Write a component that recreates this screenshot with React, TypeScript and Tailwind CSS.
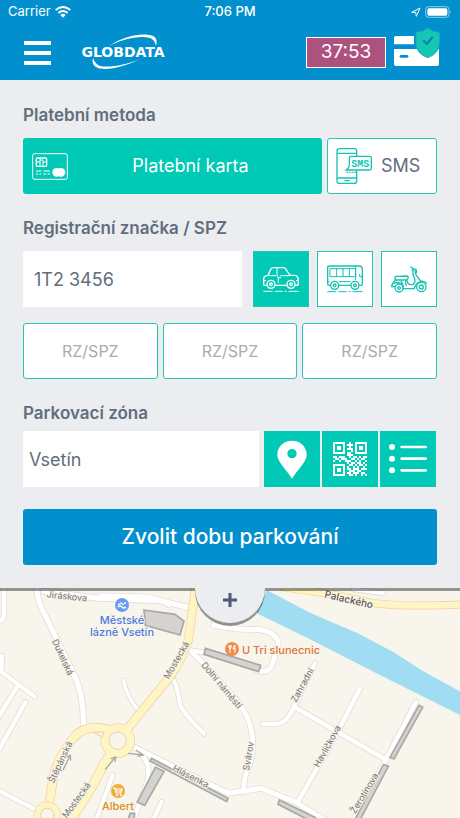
import React, { useState } from "react";
import clsx from "clsx";

const streets = [
  { d: "M-10 128 L6 120 Q14 112 12 90 V20", w: 14 },
  { d: "M110 20 Q112 65 130 95 L225 290 Q252 350 250 432", w: 16 },
  { d: "M130 34 L300 55 L480 62 L575 85", w: 16 },
  { d: "M300 45 L420 48 Q480 50 505 76", w: 10 },
  { d: "M6 228 L4 275 L105 350", w: 13 },
  { d: "M52 320 L-10 420", w: 13 },
  { d: "M76 367 L-6 515", w: 13 },
  { d: "M-10 628 L60 665 L110 690", w: 13 },
  { d: "M370 300 Q380 350 418 395", w: 11 },
  { d: "M515 290 Q535 320 540 375 Q555 405 612 461", w: 13 },
  { d: "M565 210 L600 215 L640 222", w: 12 },
  { d: "M575 215 Q600 240 690 338 Q750 400 757 470 Q760 530 742 570 Q730 600 731 635", w: 15 },
  { d: "M400 500 L520 560 L685 640 L784 625 L890 668 L975 720", w: 15 },
  { d: "M430 530 Q455 560 440 610 L400 720", w: 14 },
  { d: "M338 585 L285 730", w: 13 },
  { d: "M485 665 L455 730", w: 13 },
  { d: "M640 135 Q700 150 770 148 Q830 155 835 190 Q825 235 812 262 Q800 280 770 272", w: 15 },
  { d: "M945 250 L882 380 Q860 430 830 432 H788", w: 13 },
  { d: "M882 380 L1155 538", w: 14 },
  { d: "M1080 325 L1008 465 L892 668", w: 14 },
  { d: "M1248 366 L1155 545 L1060 720", w: 14 },
  { d: "M1060 28 L1150 40", w: 12 },
];

const mainRoads = [
  { d: "M588 15 L565 180 Q545 240 510 290 L400 425 L355 480", w: 23 },
  { d: "M350 458 Q260 420 215 480 Q170 540 160 590 L145 690", w: 24 },
  { d: "M355 490 L310 555 Q280 620 205 730", w: 26 },
  { d: "M850 22 Q1000 40 1110 68 Q1210 82 1390 73", w: 20 },
];

const buildings = [
  "M432 90 L525 103 L552 123 L540 165 L436 136 Z",
  "M616 205 L782 256 L776 275 L612 223 Z",
  "M466 562 L492 574 L434 676 L412 666 Z",
  "M455 535 L684 655 L680 665 L450 543 Z",
  "M838 660 L945 712 L930 722 L834 673 Z",
  "M1257 376 L1268 382 L1182 537 L1170 532 Z",
  "M1150 554 L1165 559 L1080 720 L1064 720 Z",
  "M390 700 L404 700 L402 720 L384 720 Z",
];

const streetNames = [
  { name: "Jiráskova", x: 67, y: 8, rotate: 6 },
  { name: "Dukelská", x: 63, y: 69, rotate: 65 },
  { name: "Mostecká", x: 176, y: 72, rotate: -60 },
  { name: "Dolní náměstí", x: 222, y: 97, rotate: 50 },
  { name: "Štěpánská", x: 60, y: 174, rotate: -65 },
  { name: "Mostecká", x: 76, y: 212, rotate: -54 },
  { name: "Hlásenka", x: 191, y: 188, rotate: 27 },
  { name: "Svárov", x: 248, y: 168, rotate: -80 },
  { name: "Zahradní", x: 302, y: 97, rotate: -61 },
  { name: "Havlíčkova", x: 327, y: 158, rotate: -61 },
  { name: "Žerotínova", x: 364, y: 205, rotate: -59 },
];

const Roads = ({ items, edge, fill }: { items: typeof streets; edge: string; fill: string }) => (
  <g fill="none" strokeLinecap="round" strokeLinejoin="round">
    {items.map((r) => (
      <path key={r.d} d={r.d} stroke={edge} strokeWidth={r.w + 4} />
    ))}
    {items.map((r) => (
      <path key={r.d} d={r.d} stroke={fill} strokeWidth={r.w} />
    ))}
  </g>
);

const CityMap = () => (
  <svg
    viewBox="0 0 460 230"
    preserveAspectRatio="xMidYMin slice"
    className="min-h-[230px] w-full flex-1 bg-[#f8f5ed] font-['Inter','Noto_Sans',sans-serif]"
    role="img"
    aria-label="Mapa"
  >
    <g transform="translate(0 -8) scale(0.33333)">
      <path
        d="M800 30 L930 98 L1070 158 L1180 216 L1270 274 L1390 340 V410 L1230 330 L1110 270 L930 178 L770 100 Z"
        fill="#a0dcf2"
      />
      <Roads items={streets} edge="#dcd9d2" fill="#ffffff" />
      <circle cx="353" cy="482" r="52" fill="#f7cc9b" />
      <Roads items={mainRoads} edge="#f7cc9b" fill="#fdf5c4" />
      <circle cx="353" cy="482" r="50" fill="#fdf5c4" />
      <circle cx="353" cy="482" r="26" fill="#f8f5ed" stroke="#f3cda5" strokeWidth="3" />
      <path d="M278 457 L312 456 L308 470 Z" fill="#f8f5ed" stroke="#f3cda5" strokeWidth="3" />
      <circle cx="142" cy="705" r="40" fill="#fdf5c4" stroke="#f7cc9b" strokeWidth="2" />
      <circle cx="142" cy="705" r="20" fill="#f8f5ed" stroke="#f3cda5" strokeWidth="3" />
      <g fill="#d5d3cf" stroke="#a9a8a5" strokeWidth="5">
        {buildings.map((d) => (
          <path key={d} d={d} />
        ))}
      </g>
      <g fill="none" stroke="#aaa9a5" strokeWidth="4">
        <path d="M188 572 L210 528 M200 532 L211 526 L212 542" />
        <path d="M316 568 L346 532 M332 536 L347 531 L345 546" />
        <path d="M384 520 L430 525 M408 510 L430 525 L412 529" />
      </g>
    </g>

    <g
      textAnchor="middle"
      dominantBaseline="central"
      stroke="#f8f5ed"
      strokeWidth="2"
      strokeLinejoin="round"
      paintOrder="stroke"
      className="text-[9px]"
      fill="#77736e"
    >
      {streetNames.map((s) => (
        <text key={s.name + s.x} transform={`translate(${s.x} ${s.y}) rotate(${s.rotate})`}>
          {s.name}
        </text>
      ))}
      <text transform="translate(349 11) rotate(13)" className="text-[10px] font-medium" fill="#5a5753">
        Palackého
      </text>
      <g className="text-[11px] font-medium">
        <g fill="#4f7bdc">
          <text x="122" y="32">Městské</text>
          <text x="122" y="44">lázně Vsetín</text>
        </g>
        <text x="281" y="62" fill="#e0743a">U Tri slunecnic</text>
        <text x="118" y="218" fill="#d98c28">Albert</text>
      </g>
    </g>

    <circle cx="122" cy="17" r="7" fill="#699cf0" />
    <path d="M118 17 l3 -2 l3 2 M118 19 q2 -2 4 0 t4 0" fill="none" stroke="#fff" strokeWidth="1.3" />
    <circle cx="125" cy="15" r="1" fill="#fff" />
    <circle cx="232" cy="61" r="7" fill="#f18b4b" />
    <path d="M229 57 v3 q1 1 2 0 v-3 M230 57 v8 M235 65 v-8 q-2 1 -2 4 h2" fill="none" stroke="#fff" strokeWidth="1" />
    <circle cx="118" cy="203" r="7" fill="#f3ac37" />
    <path d="M113 200 h2 l1 5 h5 l1 -4 h-7 M116 203 h5" fill="none" stroke="#fff" strokeWidth="1.2" />
    <circle cx="117" cy="207" r="1" fill="#fff" />
    <circle cx="121" cy="207" r="1" fill="#fff" />
  </svg>
);

const Logo = () => (
  <svg viewBox="0 0 84 36" className="ml-[30px] h-9 w-[84px]" role="img" aria-label="Globdata">
    <path d="M28 12 C42 2 62 -2 72 2 Q77 4 75 12 Q74 6 69 4 C58 1 42 5 28 12 Z" fill="#fff" />
    <path d="M59 25 C46 32 26 37 17 34 Q10 31 12 24 Q14 30 19 32 C29 34 45 31 59 25 Z" fill="#fff" />
    <text
      x="42"
      y="23"
      textAnchor="middle"
      fill="#fff"
      className="font-['DejaVu_Sans',sans-serif] text-[14px] font-bold"
    >
      GLOBDATA
    </text>
  </svg>
);

const StatusBar = () => (
  <div className="grid h-6 grid-cols-3 items-center px-2 text-[13px]">
    <div className="flex items-center gap-1">
      <span>Carrier</span>
      <svg viewBox="0 0 48 36" className="h-3 w-4" fill="none" stroke="#fff" strokeWidth="6">
        <path d="M2 12 Q24 -6 46 12" />
        <path d="M10 21 Q24 9 38 21" />
        <path d="M16 27 Q24 20 32 27 L24 35 Z" fill="#fff" stroke="none" />
      </svg>
    </div>
    <span className="text-center font-medium">7:06 PM</span>
    <div className="flex items-center justify-end gap-1">
      <svg viewBox="0 0 30 30" className="size-[10px]" fill="none" stroke="#fff" strokeWidth="3">
        <path d="M2 16 L27 3 L16 28 L14 16 Z" strokeLinejoin="round" />
      </svg>
      <svg viewBox="0 0 81 36" className="h-3 w-[27px]">
        <rect x="2" y="2" width="70" height="32" rx="9" fill="none" stroke="#8fcbe9" strokeWidth="3" />
        <rect x="7" y="7" width="60" height="22" rx="5" fill="#fff" />
        <path d="M76 13 Q81 18 76 23 Z" fill="#8fcbe9" />
      </svg>
    </div>
  </div>
);

const ShieldCard = () => (
  <svg viewBox="0 0 138 117" className="h-[39px] w-[46px]">
    <rect x="0" y="24" width="135" height="90" rx="6" fill="#fff" />
    <path d="M0 49 H135 V63 H0 Z" fill="#018fce" />
    <path d="M60 20 H70 V60 H60 Z" fill="#018fce" />
    <path
      d="M101 0 Q114 12 136 13 V46 Q136 76 101 89 Q66 76 66 46 V13 Q88 12 101 0 Z"
      fill="#15c6b4"
      stroke="#14a9c0"
      strokeWidth="3"
    />
    <path d="M88 37 L98 48 L116 27" fill="none" stroke="#0284b0" strokeWidth="6" />
    <rect x="17" y="81" width="26" height="8" rx="4" fill="#018fce" />
  </svg>
);

const CardIcon = () => (
  <svg viewBox="0 0 108 81" className="h-[27px] w-9" fill="none" stroke="#fff" strokeWidth="3">
    <rect x="2" y="2" width="104" height="77" rx="6" />
    <rect x="13" y="15" width="31" height="25" rx="3" strokeWidth="4" />
    <path d="M13 27 H24 M33 27 H44 M24 15 V40 M33 22 V40 M24 21 H33" strokeWidth="3" />
    <path d="M12 54 H28 M34 54 H54" />
    <path d="M12 63 H18 M22 63 H28 M34 63 H42 M46 63 H54" />
    <circle cx="74" cy="58" r="13" fill="#fff" stroke="none" />
    <circle cx="87" cy="58" r="13" fill="#fff" stroke="none" />
  </svg>
);

const SmsIcon = () => (
  <svg viewBox="0 0 108 108" className="size-9" fill="none" stroke="#15c3b1" strokeWidth="4">
    <rect x="3" y="2" width="59" height="104" rx="8" />
    <path d="M3 16 H62 M3 90 H62 M25 98 H41" />
    <path d="M45 25 H101 Q106 25 106 30 V61 Q106 66 101 66 H31 Q40 60 40 52 V30 Q40 25 45 25 Z" fill="#fff" />
    <path d="M31 73 H60" strokeDasharray="5 3" />
    <text
      x="73"
      y="56"
      textAnchor="middle"
      fill="#15c3b1"
      stroke="none"
      fontSize="30"
      className="font-['Liberation_Mono',monospace] font-bold"
    >
      SMS
    </text>
  </svg>
);

const CarIcon = () => (
  <svg viewBox="0 0 108 81" className="h-[27px] w-9" fill="none" stroke="currentColor" strokeWidth="4" strokeLinecap="round">
    <path d="M11 58 H4 Q2 58 2 53 V38 Q2 32 8 30 L16 27 L22 12 Q25 5 32 5 H60 Q66 5 69 10 L81 28 H96 Q106 30 106 42 V53 Q106 58 100 58 H97 M38 58 H70" />
    <path d="M17 29 H38 M52 29 H81 M42 6 V26 L46 36 V50 M48 35 H53 M2 44 H8 M100 44 H106" strokeWidth="3" />
    <circle cx="24" cy="55" r="12" />
    <circle cx="24" cy="55" r="4" />
    <circle cx="84" cy="55" r="12" />
    <circle cx="84" cy="55" r="4" />
    <path d="M2 76 H28 M37 76 H58 M66 76 H70 M78 76 H106" strokeWidth="3" />
  </svg>
);

const BusIcon = () => (
  <svg viewBox="0 0 108 84" className="h-7 w-9" fill="none" stroke="currentColor" strokeWidth="4" strokeLinecap="round">
    <path d="M10 61 H6 Q2 61 2 57 V8 Q2 3 8 3 H96 Q106 3 106 14 V57 Q106 61 102 61 H97 M37 61 H70" />
    <path d="M10 11 H86 V35 H10 Z M29 11 V35 M48 11 V35 M67 11 V35 M86 3 V44 M98 28 V35 H106" strokeWidth="3" />
    <path d="M2 50 H6 M37 50 H70" strokeWidth="3" />
    <circle cx="23" cy="61" r="12" fill="#fff" />
    <circle cx="23" cy="61" r="4" />
    <circle cx="84" cy="61" r="12" fill="#fff" />
    <circle cx="84" cy="61" r="4" />
    <path d="M2 80 H26 M36 80 H58 M66 80 H70 M78 80 H106" strokeWidth="3" />
  </svg>
);

const ScooterIcon = () => (
  <svg viewBox="0 0 108 81" className="h-[27px] w-9" fill="none" stroke="currentColor" strokeWidth="4" strokeLinecap="round" strokeLinejoin="round">
    <path d="M12 34 Q14 30 22 31 L48 30 Q54 32 50 38 L46 42 H16 Q10 40 12 34 Z" />
    <path d="M14 42 Q3 50 2 62 H12 M36 64 Q38 54 30 46 M46 42 Q42 50 46 58 M36 68 H70 Q74 50 90 46 L76 28 Q72 20 72 12" />
    <path d="M66 12 V26 Q72 36 72 46 Q70 56 60 56 Q50 56 48 44" />
    <path d="M60 3 L66 8 L64 14 M66 8 L74 10 Q78 14 76 20 M90 46 Q102 44 106 52" />
    <path d="M10 52 Q18 46 32 54" />
    <circle cx="24" cy="66" r="12" />
    <circle cx="24" cy="66" r="4" />
    <circle cx="91" cy="63" r="14" />
    <circle cx="91" cy="63" r="6" />
  </svg>
);

const PinIcon = () => (
  <svg viewBox="0 0 90 117" className="h-[39px] w-[30px]">
    <path
      fillRule="evenodd"
      d="M45 2 C20 2 1 20 1 44 C1 66 28 88 45 116 C62 88 89 66 89 44 C89 20 70 2 45 2 Z M45 27 A14 14 0 1 1 45 55 A14 14 0 1 1 45 27 Z"
      fill="#fff"
    />
  </svg>
);

const qrRows = [
  "11111100100111111",
  "10000101110100001",
  "10110100100101101",
  "10110101110101101",
  "10000100010100001",
  "11111101100111111",
  "00000001110000000",
  "11011100101101011",
  "01101110011010110",
  "10010011100101001",
  "00000001011011010",
  "11111100110101101",
  "10000101001010010",
  "10110101101110111",
  "10110100111011000",
  "10000101101110110",
  "11111100110100101",
];

const QrIcon = () => (
  <svg viewBox="0 0 17 17" className="size-[34px]" shapeRendering="crispEdges" fill="#fff">
    {qrRows.map((row, y) =>
      row.split("").map((cell, x) => cell === "1" && <rect key={`${x}-${y}`} x={x} y={y} width="1" height="1" />)
    )}
  </svg>
);

const ListIcon = () => (
  <svg viewBox="0 0 114 90" className="h-[30px] w-[38px]" stroke="#fff" strokeWidth="8" strokeLinecap="round">
    {[9, 44, 79].map((y) => (
      <g key={y}>
        <circle cx="9" cy={y} r="9" fill="#fff" stroke="none" />
        <path d={`M38 ${y} H110`} />
      </g>
    ))}
  </svg>
);

const vehicles = [
  { id: "car", label: "Auto", Icon: CarIcon },
  { id: "bus", label: "Autobus", Icon: BusIcon },
  { id: "scooter", label: "Skútr", Icon: ScooterIcon },
];

const zoneTools = [
  { label: "Najít na mapě", Icon: PinIcon },
  { label: "Naskenovat QR kód", Icon: QrIcon },
  { label: "Seznam zón", Icon: ListIcon },
];

const App = () => {
  const [vehicle, setVehicle] = useState("car");
  const [plate, setPlate] = useState("1T2 3456");
  const [zone, setZone] = useState("Vsetín");

  return (
    <div className="flex min-h-screen flex-col bg-[#ebedf1] font-['Inter','Noto_Sans',sans-serif] text-[#626d7d]">
      <header className="bg-[#018fce] text-white">
        <StatusBar />
        <div className="flex h-14 items-center pr-5 pl-6">
          <button type="button" aria-label="Menu" className="flex flex-col gap-[6px] pt-[2px]">
            <span className="h-1 w-[27px] bg-white" />
            <span className="h-1 w-[27px] bg-white" />
            <span className="h-1 w-[27px] bg-white" />
          </button>
          <Logo />
          <div className="ml-auto flex items-center gap-2">
            <div className="flex h-[31px] w-20 items-center justify-center border border-white bg-[#ad527e] text-[19px]">
              37:53
            </div>
            <button type="button" aria-label="Platební karta ověřena" className="pb-[10px]">
              <ShieldCard />
            </button>
          </div>
        </div>
      </header>

      <main className="relative z-10 bg-[#ebedf1] px-[23px] pt-[23px] pb-[23px] drop-shadow-[0_3px_0_rgba(0,0,0,0.4)]">
        <h2 className="mb-[11px] text-[17px] leading-6 font-semibold">Platební metoda</h2>
        <div className="flex gap-[5px]">
          <button type="button" className="flex h-14 flex-1 items-center rounded-[3px] bg-[#00c9b5] px-[9px] text-lg text-white">
            <CardIcon />
            <span className="flex-1 text-center">Platební karta</span>
          </button>
          <button
            type="button"
            className="flex h-14 w-[110px] items-center gap-[9px] rounded-[3px] border border-[#2cc5b5] bg-white pl-2 text-lg"
          >
            <SmsIcon />
            SMS
          </button>
        </div>

        <label htmlFor="plate" className="mt-[22px] mb-[11px] block text-[17px] leading-6 font-semibold">
          Registrační značka / SPZ
        </label>
        <div className="flex">
          <input
            id="plate"
            value={plate}
            onChange={(e) => setPlate(e.target.value)}
            className="mr-[11px] h-14 min-w-0 flex-1 bg-white px-[11px] text-lg outline-none"
          />
          <div className="flex gap-2">
            {vehicles.map(({ id, label, Icon }) => (
              <button
                key={id}
                type="button"
                aria-label={label}
                onClick={() => setVehicle(id)}
                className={clsx(
                  "flex size-14 items-center justify-center border border-[#1ac6b5]",
                  vehicle === id ? "bg-[#00c9b5] text-white" : "bg-white text-[#15c3b1]"
                )}
              >
                <Icon />
              </button>
            ))}
          </div>
        </div>

        <div className="mt-4 grid grid-cols-3 gap-[5px]">
          {[1, 2, 3].map((n) => (
            <input
              key={n}
              aria-label={`RZ/SPZ ${n}`}
              placeholder="RZ/SPZ"
              className="h-14 w-full rounded-[3px] border border-[#2cc5b5] bg-white text-center text-base outline-none placeholder:text-[#acacac]"
            />
          ))}
        </div>

        <label htmlFor="zone" className="mt-[22px] mb-[6px] block text-[17px] leading-6 font-semibold">
          Parkovací zóna
        </label>
        <div className="flex">
          <input
            id="zone"
            value={zone}
            onChange={(e) => setZone(e.target.value)}
            className="mr-[5px] h-14 min-w-0 flex-1 bg-white px-[6px] text-lg outline-none"
          />
          <div className="flex gap-[2px] pr-[1px]">
            {zoneTools.map(({ label, Icon }) => (
              <button key={label} type="button" aria-label={label} className="flex size-14 items-center justify-center bg-[#00c9b5]">
                <Icon />
              </button>
            ))}
          </div>
        </div>

        <button type="button" className="mt-[22px] h-14 w-full rounded-[3px] bg-[#018fce] text-[21px] font-medium text-white">
          Zvolit dobu parkování
        </button>

        {/* pull-down tab hanging over the map */}
        <button
          type="button"
          aria-label="Rozbalit"
          className="absolute top-full left-1/2 flex h-[35px] w-[70px] -translate-x-1/2 justify-center rounded-b-full bg-[#ebedf1] pt-[5px]"
        >
          <svg viewBox="0 0 14 14" className="size-[14px]" stroke="#4d5878" strokeWidth="3">
            <path d="M7 0 V14 M0 7 H14" />
          </svg>
        </button>
      </main>

      <CityMap />
    </div>
  );
};

export default App;
